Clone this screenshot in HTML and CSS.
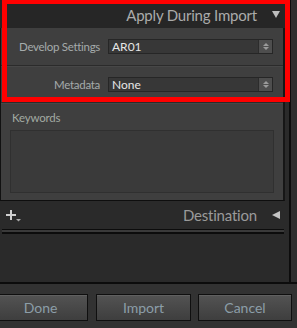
FILE: index.html
```html
<!DOCTYPE html>
<html>
<head>
<meta charset="utf-8">
<link rel="stylesheet" href="styles.css">
</head>
<body>
<div class="app">
  <div class="top">
    <div class="col">
      <div class="panel-head">
        <span class="head-title">Apply During Import</span>
        <span class="tri-down"></span>
      </div>
      <div class="panel-body">
        <div class="row">
          <span class="label">Develop Settings</span>
          <div class="select"><span class="sel-text">AR01</span><span class="stepper"><i class="up"></i><i class="down"></i></span></div>
        </div>
        <div class="row sep">
          <span class="label">Metadata</span>
          <div class="select"><span class="sel-text">None</span><span class="stepper"><i class="up"></i><i class="down"></i></span></div>
        </div>
        <div class="keywords sep">
          <div class="kw-label">Keywords</div>
          <div class="kw-box"></div>
        </div>
      </div>
      <div class="dest-head">
        <span class="plus">
          <svg width="15" height="12" viewBox="0 0 15 12"><path d="M4 0h2v4h4v2H6v4H4V6H0V4h4z" fill="#cfcfcf"/><path d="M10 9h5l-2.5 2.5z" fill="#a8a8a8"/></svg>
        </span>
        <span class="dest-title">Destination</span>
        <span class="tri-left"></span>
      </div>
      <div class="collapsed-bar"></div>
      <div class="fill"></div>
    </div>
    <div class="rail"></div>
  </div>
  <div class="footer">
    <button class="btn btn-done">Done</button>
    <button class="btn btn-import">Import</button>
    <button class="btn btn-cancel">Cancel</button>
  </div>
  <div class="highlight"></div>
</div>
</body>
</html>
```

FILE: styles.css
```css
* { box-sizing: border-box; }
html, body { margin: 0; padding: 0; background: #2a2a2a; }
.app {
  position: relative;
  width: 297px;
  height: 328px;
  overflow: hidden;
  font-family: Lato, "Open Sans", sans-serif;
  background: #2a2a2a;
}
.top {
  display: flex;
  height: 284px;
  border-bottom: 2px solid #0c0c0c;
}
.col {
  width: 285px;
  display: flex;
  flex-direction: column;
}
.panel-head {
  height: 28px;
  background: #262626;
  display: flex;
  align-items: center;
  justify-content: flex-end;
  padding-right: 5px;
  padding-top: 1px;
}
.head-title {
  font-size: 15px;
  letter-spacing: -0.2px;
  color: #ababab;
  margin-right: 15px;
}
.tri-down {
  width: 0; height: 0;
  border-left: 4px solid transparent;
  border-right: 4px solid transparent;
  border-top: 7px solid #bdbdbd;
}
.panel-body {
  background: #3f3f3f;
  border-left: 1px solid #111;
  border-right: 2px solid #161616;
  border-bottom: 1px solid #0e0e0e;
  height: 173px;
  display: flex;
  flex-direction: column;
}
.row {
  height: 37px;
  display: grid;
  grid-template-columns: 99px 165px;
  column-gap: 8px;
  align-items: center;
}
.sep {
  border-top: 1px solid #2b2b2b;
  box-shadow: inset 0 1px 0 #474747;
}
.label {
  text-align: right;
  font-size: 11.5px;
  letter-spacing: -0.3px;
  color: #a5abab;
}
.select {
  height: 15px;
  background: #373737;
  border: 1px solid #262626;
  display: flex;
  align-items: center;
  justify-content: space-between;
  padding-left: 3px;
}
.sel-text {
  font-size: 12px;
  color: #e6e6e6;
  line-height: 13px;
}
.stepper {
  width: 14px;
  height: 13px;
  background: #4e4e4e;
  border-left: 1px solid #2c2c2c;
  display: flex;
  flex-direction: column;
  align-items: center;
  justify-content: center;
  gap: 1px;
}
.stepper .up {
  width: 0; height: 0;
  border-left: 3px solid transparent;
  border-right: 3px solid transparent;
  border-bottom: 3px solid #9a9a9a;
}
.stepper .down {
  width: 0; height: 0;
  border-left: 3px solid transparent;
  border-right: 3px solid transparent;
  border-top: 3px solid #9a9a9a;
}
.keywords {
  flex: 1;
  padding: 8px 9px 6px 9px;
  display: flex;
  flex-direction: column;
}
.kw-label {
  font-size: 11.5px;
  letter-spacing: -0.2px;
  line-height: 14px;
  color: #a2aaa2;
  padding-left: 2px;
  margin-bottom: 5px;
}
.kw-box {
  height: 63px;
  background: #3a3a3a;
  border: 1px solid #303030;
}
.dest-head {
  height: 28px;
  display: flex;
  align-items: center;
  padding-left: 6px;
  padding-right: 5px;
}
.plus { display: flex; margin-top: 2px; }
.dest-title {
  margin-left: auto;
  margin-right: 15px;
  font-size: 15px;
  letter-spacing: -0.2px;
  color: #9a9a9a;
}
.tri-left {
  width: 0; height: 0;
  border-top: 4px solid transparent;
  border-bottom: 4px solid transparent;
  border-right: 8px solid #c4c4c4;
}
.collapsed-bar {
  height: 5px;
  margin-left: 2px;
  margin-right: 1px;
  border-top: 1px solid #0c0c0c;
  border-bottom: 2px solid #0c0c0c;
  background: #3a3a3a;
}
.fill { flex: 1; }
.rail {
  flex: 1;
  display: flex;
  padding-left: 4px;
}
.rail::before {
  content: "";
  width: 2px;
  background: #0c0c0c;
}
.rail::after {
  content: "";
  flex: 1;
  background: #2e2e2e;
}
.footer {
  height: 44px;
  background: #323232;
  display: flex;
  align-items: flex-start;
  padding-top: 10px;
}
.btn {
  height: 27px;
  border: 1px solid #0f0f0f;
  background: linear-gradient(#535353, #3e3e3e);
  box-shadow: inset 0 1px 0 #606060;
  color: #8c9ea8;
  font-family: Lato, "Open Sans", sans-serif;
  font-size: 14px;
  padding: 0;
}
.btn-done { width: 95px; margin-left: -7px; }
.btn-import { width: 95px; margin-left: 8px; }
.btn-cancel { width: 94px; margin-left: 7px; }
.highlight {
  position: absolute;
  left: 2px;
  top: -1px;
  width: 288px;
  height: 103px;
  border: 5px solid #ff0000;
  pointer-events: none;
}
```
